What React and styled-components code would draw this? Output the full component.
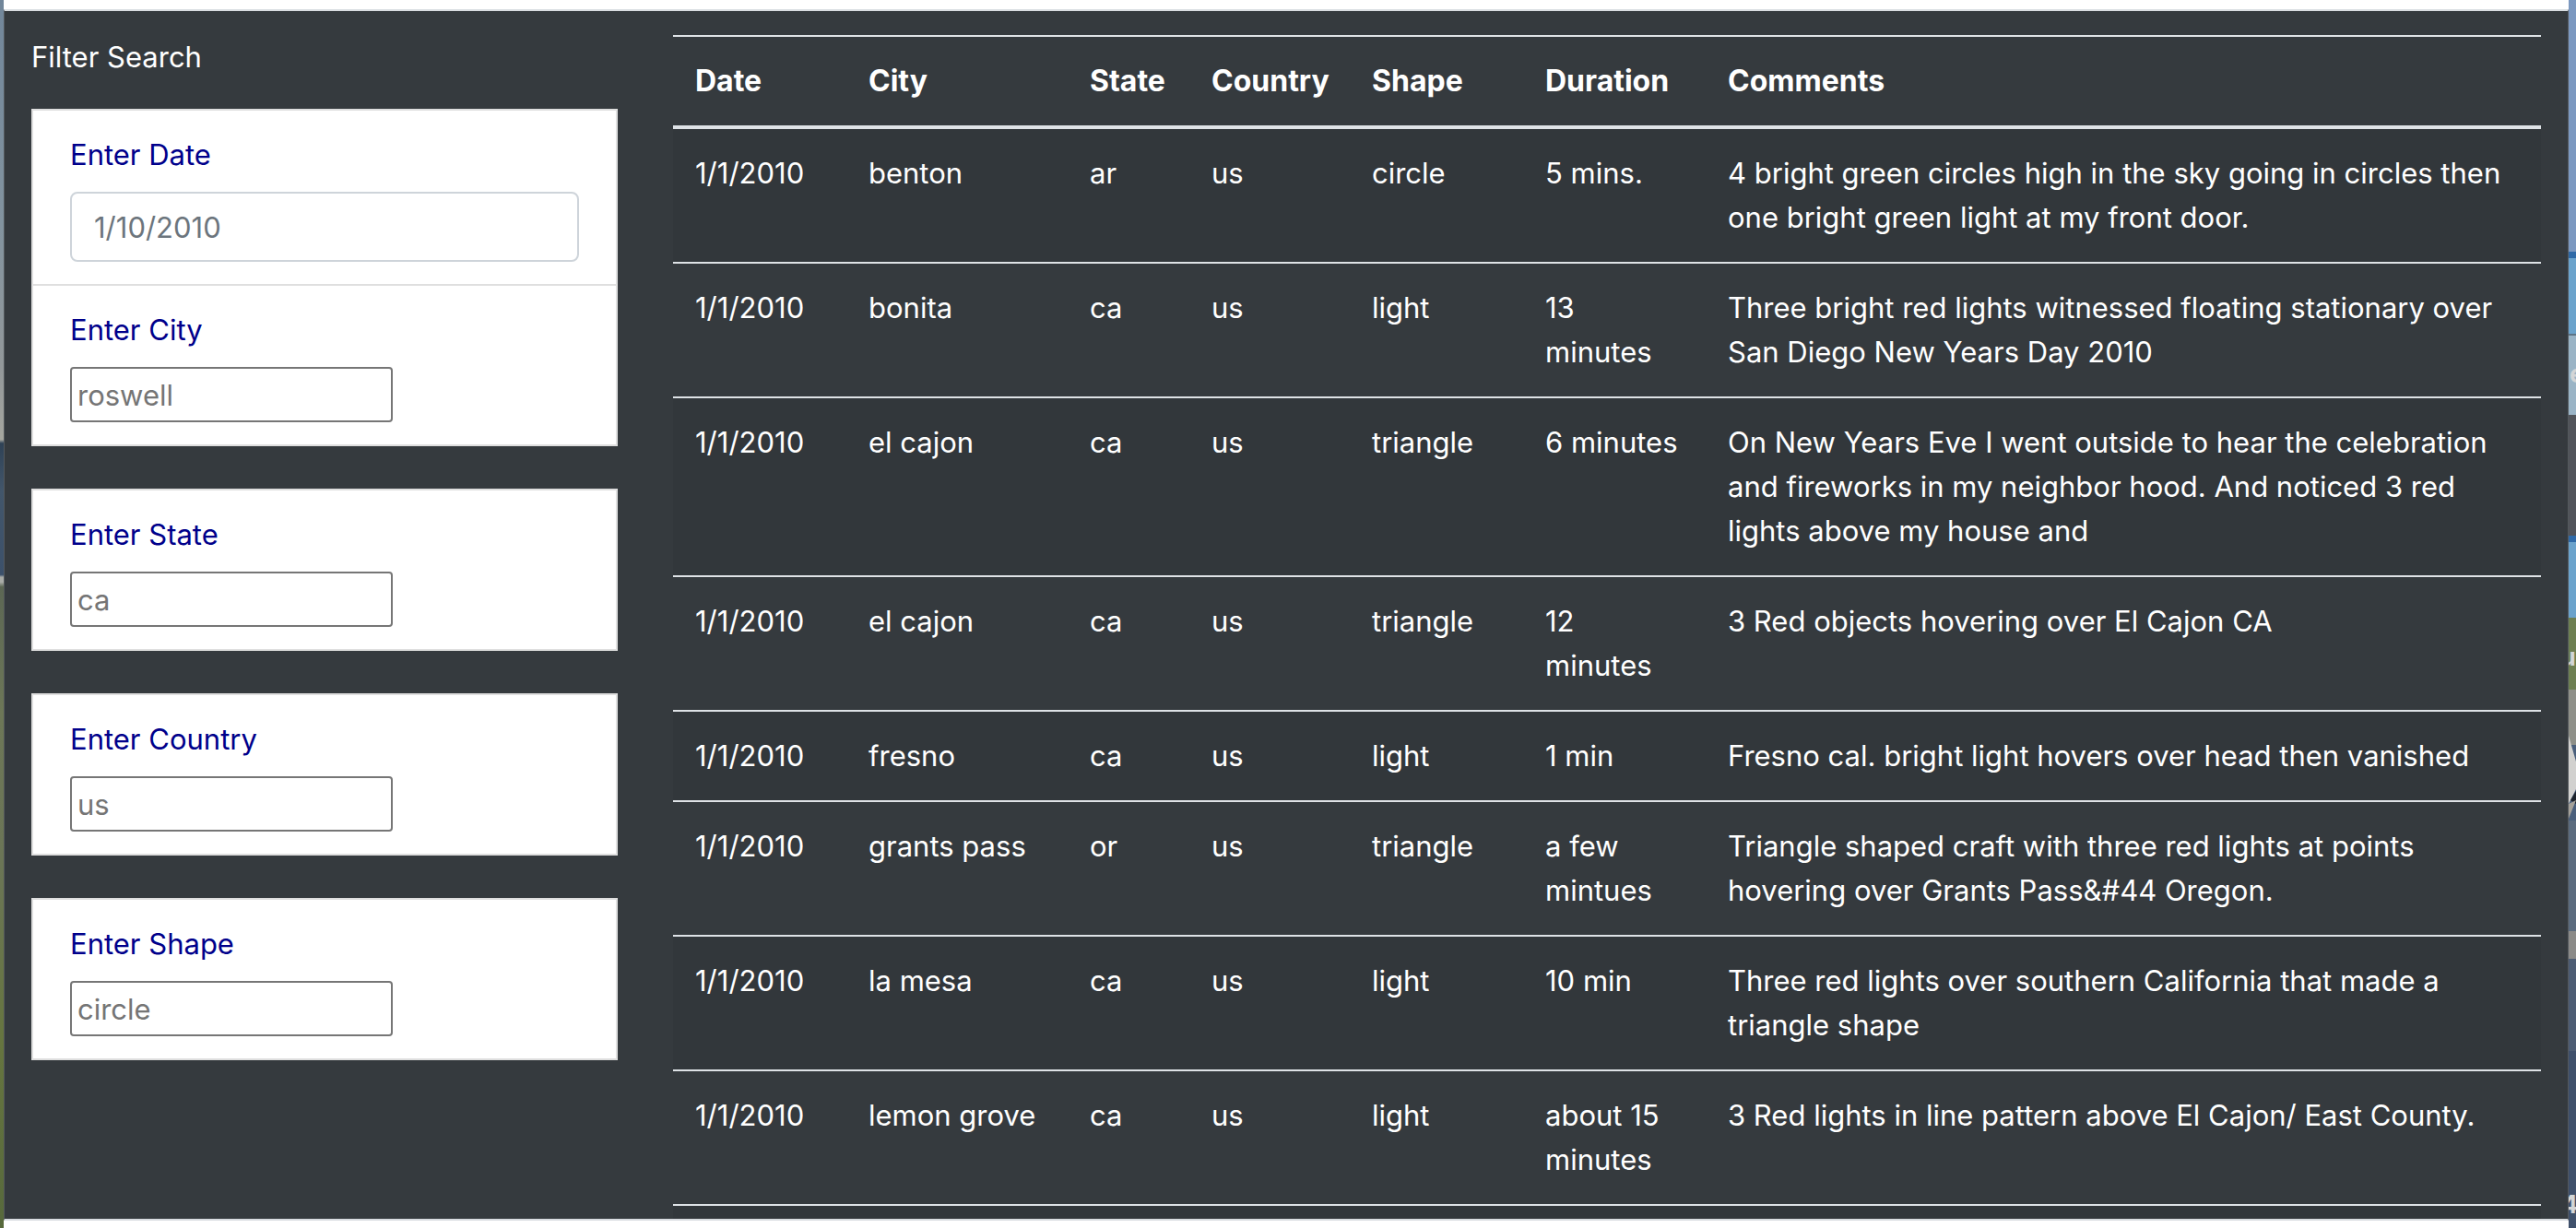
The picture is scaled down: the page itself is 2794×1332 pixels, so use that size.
import React from "react";
import styled, { createGlobalStyle } from "styled-components";

const GlobalStyle = createGlobalStyle`
  *, *::before, *::after { box-sizing: border-box; }
  body {
    margin: 0;
    background: #fff;
    color: #fff;
    font-family: Inter, "Liberation Sans", sans-serif;
    font-size: 31px;
    line-height: 48px;
  }
`;

const Desktop = styled.div`
  display: grid;
  grid-template-columns: 4px minmax(0, 1fr) 8px;
  min-height: 100vh;
`;

const LeftWallpaper = styled.div`
  background: linear-gradient(
    to bottom,
    #71869a 0, #82939f 18%, #93989a 30%, #a5a69f 35.8%,
    #2f4256 36.1%, #42566b 40%, #3c516b 46.8%,
    #a9aca7 47%, #a9aca7 47.4%, #5c6754 47.8%,
    #6d7757 58%, #6b7556 70%, #66753f 85%, #57693c 100%
  );
`;

const RightWallpaper = styled.svg`
  display: block;
  width: 8px;
  height: 100%;
  font-size: 27px;
  font-weight: 700;
  fill: #d3d5d6;
`;

const Window = styled.div`
  background: #fff;
  padding: 10px 0 8px;
`;

const Panel = styled.main`
  display: grid;
  grid-template-columns: 636px minmax(0, 1fr);
  column-gap: 60px;
  align-items: start;
  padding: 0 29px;
  background: #353a3e;
  border-style: solid;
  border-width: 2px 1px;
  border-color: #d9dde1 #53585c;
`;

const Filters = styled.form`
  display: flex;
  flex-direction: column;
  gap: 46px;
  padding-top: 26px;
`;

const FilterTitle = styled.p`
  margin: 0 0 -14px;
`;

const Card = styled.div`
  background: #fff;
  border: 2px solid #dfdfdf;
`;

const Field = styled.div`
  display: flex;
  flex-direction: column;
  align-items: flex-start;
  gap: 16px;
  padding: 24px 40px;

  & + & {
    border-top: 2px solid #dfdfdf;
  }
`;

const Label = styled.label`
  color: #00008b;
`;

const TextInput = styled.input`
  width: ${(p) => (p.$wide ? "100%" : "350px")};
  height: ${(p) => (p.$wide ? "76px" : "60px")};
  padding: ${(p) => (p.$wide ? "0 24px" : "0 6px")};
  border: 2px solid ${(p) => (p.$wide ? "#ced4da" : "#767676")};
  border-radius: ${(p) => (p.$wide ? "8px" : "4px")};
  background: #fff;
  color: #495057;
  font: inherit;

  &::placeholder {
    color: ${(p) => (p.$wide ? "#6c757d" : "#757575")};
    opacity: 1;
  }
`;

const Table = styled.table`
  width: 100%;
  margin-top: 26px;
  table-layout: fixed;
  border-collapse: separate;
  border-spacing: 0;
`;

const Col = styled.col`
  width: ${(p) => p.$width};
`;

const HeadCell = styled.th`
  padding: 24px;
  border-top: 2px solid #dee2e6;
  border-bottom: 4px solid #dee2e6;
  font-size: 32px;
  font-weight: 700;
  text-align: left;
`;

const Row = styled.tr`
  &:nth-child(odd) {
    background: #32373b;
  }
`;

const Cell = styled.td`
  padding: 24px;
  border-bottom: 2px solid #dee2e6;
  vertical-align: top;
`;

const NextRowEdge = styled.td`
  height: 14px;
  padding: 0;
`;

const columns = [
  ["Date", "188px"],
  ["City", "240px"],
  ["State", "132px"],
  ["Country", "174px"],
  ["Shape", "188px"],
  ["Duration", "198px"],
  ["Comments", "auto"],
];

const sightings = [
  ["1/1/2010", "benton", "ar", "us", "circle", "5 mins.", "4 bright green circles high in the sky going in circles then one bright green light at my front door."],
  ["1/1/2010", "bonita", "ca", "us", "light", "13 minutes", "Three bright red lights witnessed floating stationary over San Diego New Years Day 2010"],
  ["1/1/2010", "el cajon", "ca", "us", "triangle", "6 minutes", "On New Years Eve I went outside to hear the celebration and fireworks in my neighbor hood. And noticed 3 red lights above my house and"],
  ["1/1/2010", "el cajon", "ca", "us", "triangle", "12 minutes", "3 Red objects hovering over El Cajon CA"],
  ["1/1/2010", "fresno", "ca", "us", "light", "1 min", "Fresno cal. bright light hovers over head then vanished"],
  ["1/1/2010", "grants pass", "or", "us", "triangle", "a few mintues", "Triangle shaped craft with three red lights at points hovering over Grants Pass&#44 Oregon."],
  ["1/1/2010", "la mesa", "ca", "us", "light", "10 min", "Three red lights over southern California that made a triangle shape"],
  ["1/1/2010", "lemon grove", "ca", "us", "light", "about 15 minutes", "3 Red lights in line pattern above El Cajon/ East County."],
];

const cards = [
  [
    { id: "date", label: "Enter Date", hint: "1/10/2010", wide: true },
    { id: "city", label: "Enter City", hint: "roswell" },
  ],
  [{ id: "state", label: "Enter State", hint: "ca" }],
  [{ id: "country", label: "Enter Country", hint: "us" }],
  [{ id: "shape", label: "Enter Shape", hint: "circle" }],
];

const wallpaperBands = [
  [0, 273, "#7b98c0"],
  [273, 7, "#2f6aa8"],
  [280, 82, "#6ba3cc"],
  [362, 2, "#5d7486"],
  [364, 86, "#9ab4c6"],
  [450, 131, "#51545a"],
  [581, 7, "#2f6aa8"],
  [588, 82, "#6ba3cc"],
  [670, 78, "#6d7f52"],
  [748, 60, "#8f9089"],
  [808, 82, "#4a5f7c"],
  [890, 120, "#5b6b7e"],
  [1010, 30, "#8b8a88"],
  [1040, 100, "#4d5c73"],
  [1140, 192, "#3f506b"],
];

export default function App() {
  return (
    <>
      <GlobalStyle />
      <Desktop>
        <LeftWallpaper />
        <Window>
          <Panel>
            <Filters>
              <FilterTitle>Filter Search</FilterTitle>
              {cards.map((fields) => (
                <Card key={fields[0].id}>
                  {fields.map((f) => (
                    <Field key={f.id}>
                      <Label htmlFor={f.id}>{f.label}</Label>
                      <TextInput id={f.id} type="text" placeholder={f.hint} $wide={f.wide} />
                    </Field>
                  ))}
                </Card>
              ))}
            </Filters>
            <Table>
              <colgroup>
                {columns.map(([name, width]) => (
                  <Col key={name} $width={width} />
                ))}
              </colgroup>
              <thead>
                <tr>
                  {columns.map(([name]) => (
                    <HeadCell key={name} scope="col">{name}</HeadCell>
                  ))}
                </tr>
              </thead>
              <tbody>
                {sightings.map((row, i) => (
                  <Row key={i}>
                    {row.map((value, j) => (
                      <Cell key={j}>{value}</Cell>
                    ))}
                  </Row>
                ))}
                <Row aria-hidden="true">
                  <NextRowEdge colSpan={columns.length} />
                </Row>
              </tbody>
            </Table>
          </Panel>
        </Window>
        <RightWallpaper viewBox="0 0 8 1332" preserveAspectRatio="xMinYMin slice" aria-hidden="true">
          {wallpaperBands.map(([y, h, fill]) => (
            <rect key={y} x="0" y={y} width="8" height={h} fill={fill} />
          ))}
          <polygon points="0,798 8,826 8,856 0,872" fill="#d2d1cf" />
          <polygon points="8,858 8,872 2,868" fill="#1d222c" />
          <polygon points="0,872 8,868 0,888" fill="#a5a19a" />
          <text x="1" y="415">e</text>
          <text x="-9" y="722">u</text>
          <text x="-8" y="1316">4</text>
        </RightWallpaper>
      </Desktop>
    </>
  );
}
